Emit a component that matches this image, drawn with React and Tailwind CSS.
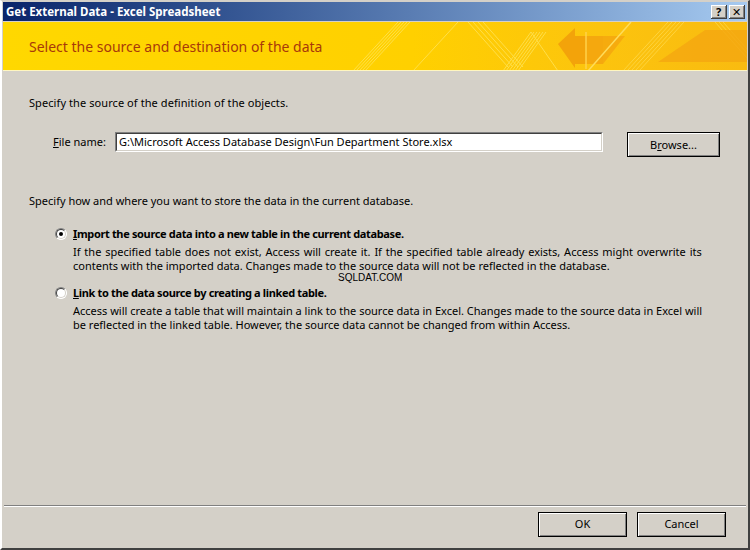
import { Fragment } from 'react';

// Banner art: yellow ribbon with stripes and the left pointing arrow
function BannerArt() {
  return (
    <svg className="absolute inset-0" width="744" height="49" viewBox="0 0 744 49" preserveAspectRatio="none">
      <defs>
        <linearGradient id="ban" x1="0" y1="0" x2="1" y2="0">
          <stop offset="0" stopColor="#ffd800" />
          <stop offset="0.55" stopColor="#ffd000" />
          <stop offset="0.8" stopColor="#fcc40e" />
          <stop offset="1" stopColor="#f9bb10" />
        </linearGradient>
      </defs>
      <rect width="744" height="49" fill="url(#ban)" />
      {/* faint stripe bands */}
      <g stroke="#ffe45a" strokeWidth="1" opacity="0.8">
        <line x1="350" y1="49" x2="395" y2="0" />
        <line x1="353" y1="49" x2="398" y2="0" />
        <line x1="356" y1="49" x2="401" y2="0" />
        <line x1="359" y1="49" x2="404" y2="0" />
        <line x1="362" y1="49" x2="407" y2="0" />
        <line x1="410" y1="49" x2="455" y2="0" />
        <line x1="465" y1="0" x2="505" y2="45" />
        <line x1="470" y1="0" x2="510" y2="45" />
        <line x1="475" y1="0" x2="515" y2="45" />
        <line x1="480" y1="0" x2="520" y2="45" />
        <line x1="500" y1="49" x2="528" y2="10" />
        <line x1="503" y1="49" x2="531" y2="10" />
        <line x1="506" y1="49" x2="534" y2="10" />
        <line x1="509" y1="49" x2="537" y2="10" />
        <line x1="512" y1="49" x2="540" y2="10" />
        <line x1="515" y1="49" x2="543" y2="10" />
        <line x1="528" y1="10" x2="555" y2="49" />
      </g>
      {/* arrow */}
      <path d="M555 22 L572 6 L572 14 L600 14 L600 42 L572 42 L572 46 Z" fill="#f29e0a" opacity="0.9" />
      <path d="M583 14 L622 14 L600 42 L583 42 Z" fill="#f5a80e" opacity="0.9" />
      <line x1="583" y1="10" x2="583" y2="47" stroke="#ffd24a" strokeWidth="1.5" />
      <line x1="585" y1="49" x2="628" y2="0" stroke="#ffdc5a" strokeWidth="1.5" />
      <g stroke="#ffd94a" strokeWidth="1" opacity="0.8">
        <line x1="620" y1="49" x2="665" y2="0" />
        <line x1="624" y1="49" x2="669" y2="0" />
        <line x1="628" y1="49" x2="673" y2="0" />
        <line x1="632" y1="49" x2="677" y2="0" />
        <line x1="636" y1="49" x2="681" y2="0" />
        <line x1="712" y1="0" x2="744" y2="36" />
        <line x1="716" y1="0" x2="744" y2="31" />
        <line x1="720" y1="0" x2="744" y2="27" />
      </g>
      {/* right triangle */}
      <path d="M655 40 L702 8 L744 8 L744 40 Z" fill="#f5a810" opacity="0.85" />
    </svg>
  );
}

function Btn({ children, className = '' }) {
  return (
    <button className={`border border-black bg-[#d4d0c8] shadow-[inset_1px_1px_0_#ffffff,inset_-1px_-1px_0_#808080] text-[11px] text-black ${className}`}>
      {children}
    </button>
  );
}

function Radio({ checked }) {
  return (
    <span className="relative mt-[1px] h-[12px] w-[12px] shrink-0 rounded-full border border-[#808080] border-r-white border-b-white bg-white">
      <span className="absolute inset-0 rounded-full border border-[#404040] border-r-[#d4d0c8] border-b-[#d4d0c8]" />
      {checked && <span className="absolute left-[3px] top-[3px] h-[4px] w-[4px] rounded-full bg-black" />}
    </span>
  );
}

export default function App() {
  const font = { fontFamily: "'Noto Sans', 'DejaVu Sans', sans-serif" };

  return (
    <div className="flex h-[550px] w-[750px] flex-col border-l-2 border-t border-r-2 border-b-2 border-l-white border-t-[#d4d0c8] border-r-[#404040] border-b-[#404040] bg-[#d4d0c8] text-[11px] text-black" style={font}>
      {/* Title bar */}
      <div className="mx-[1px] mt-[1px] flex h-[19px] items-center bg-gradient-to-r from-[#0a246a] to-[#a6caf0] pl-[3px] pr-[2px]">
        <span className="flex-1 text-[11.5px] font-bold text-white">Get External Data - Excel Spreadsheet</span>
        <Btn className="flex h-[14px] w-[16px] items-center justify-center border-0 border-r border-b border-r-[#404040] border-b-[#404040] font-bold text-[11px] leading-none">?</Btn>
        <Btn className="ml-[2px] flex h-[14px] w-[16px] items-center justify-center border-0 border-r border-b border-r-[#404040] border-b-[#404040] font-bold text-[11px] leading-none">✕</Btn>
      </div>

      {/* Banner */}
      <div className="relative mx-[1px] mt-[1px] h-[49px] overflow-hidden border-b border-[#fff6c0]">
        <BannerArt />
        <div className="relative flex h-full items-center pl-[26px] text-[14px] text-[#a8390a]">
          Select the source and destination of the data
        </div>
      </div>

      {/* Body */}
      <div className="flex flex-1 flex-col px-[27px]">
        <p className="mt-[25px] leading-[13px] tracking-[0.08px]">Specify the source of the definition of the objects.</p>

        <div className="mt-[23px] flex items-start">
          <label className="ml-[24px] mt-[3px] w-[62px] leading-[13px]"><u>F</u>ile name:</label>
          <div className="h-[20px] w-[488px] border border-[#808080] border-r-white border-b-white bg-white">
            <div className="h-full border border-[#404040] border-r-[#d4d0c8] border-b-[#d4d0c8] pl-[2px] leading-[16px]">
              G:\Microsoft Access Database Design\Fun Department Store.xlsx
            </div>
          </div>
          <Btn className="ml-[24px] h-[25px] w-[93px] pt-[2px]">B<u>r</u>owse...</Btn>
        </div>

        <p className="mt-[37px] leading-[13px]">Specify how and where you want to store the data in the current database.</p>

        <div className="mt-[20px] ml-[26px] flex gap-[6px]">
          <Radio checked />
          <div className="flex flex-col">
            <span className="font-bold leading-[14px] tracking-[-0.35px]"><u>I</u>mport the source data into a new table in the current database.</span>
            <span className="mt-[4px] leading-[14px]">
              <span className="[word-spacing:1px]">If the specified table does not exist, Access will create it. If the specified table already exists, Access might overwrite its</span>
              <br />
              contents with the imported data. Changes made to the source data will not be reflected in the database.
            </span>
            <span className="ml-[265px] text-[10px] leading-[10px]" style={{ fontFamily: "'Liberation Sans', Arial, sans-serif" }}>SQLDAT.COM</span>
          </div>
        </div>

        <div className="mt-[3px] ml-[26px] flex gap-[6px]">
          <Radio />
          <div className="flex flex-col">
            <span className="font-bold leading-[14px] tracking-[-0.35px]"><u>L</u>ink to the data source by creating a linked table.</span>
            <span className="mt-[4px] leading-[13.5px]">
              Access will create a table that will maintain a link to the source data in Excel. Changes made to the source data in Excel will
              <br />
              be reflected in the linked table. However, the source data cannot be changed from within Access.
            </span>
          </div>
        </div>
      </div>

      {/* Footer */}
      <div className="mx-[2px] h-[2px] border-t border-b border-t-[#808080] border-b-white" />
      <div className="flex h-[41px] justify-end gap-[10px] pr-[22px] pt-[5px]">
        <Btn className="h-[25px] w-[89px]">OK</Btn>
        <Btn className="h-[25px] w-[89px]">Cancel</Btn>
      </div>
    </div>
  );
}
